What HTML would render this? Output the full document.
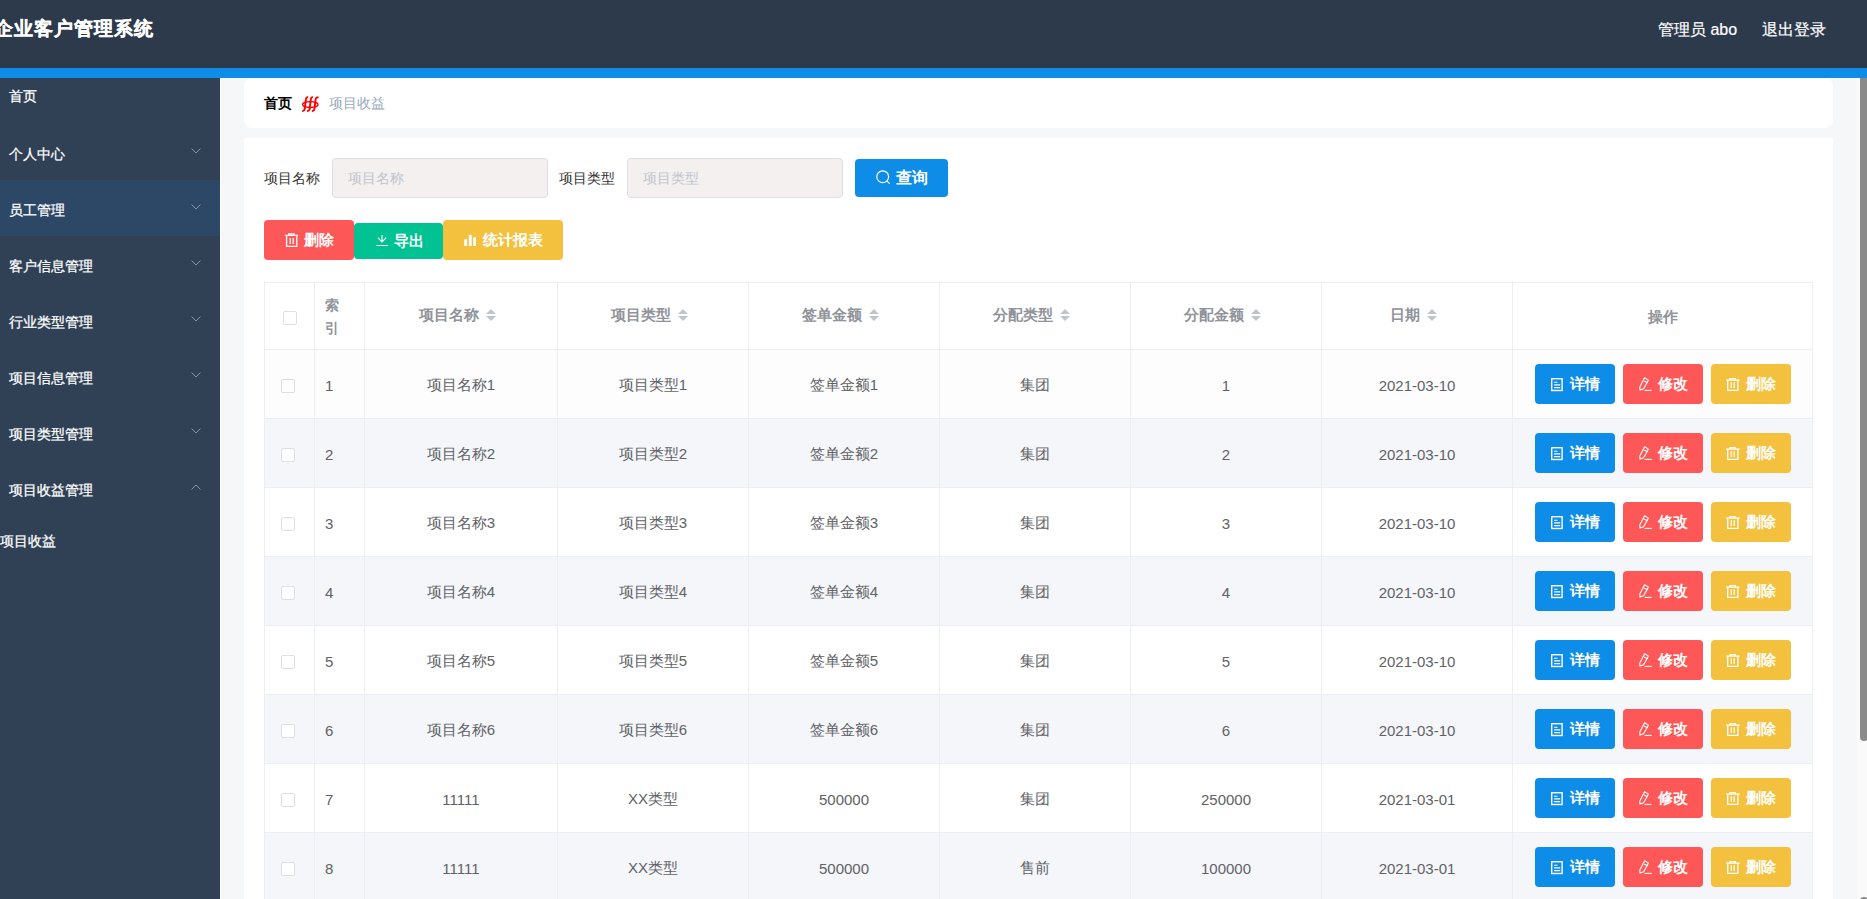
<!DOCTYPE html>
<html><head><meta charset="utf-8">
<style>
*{margin:0;padding:0;box-sizing:border-box;}
html,body{width:1867px;height:899px;overflow:hidden;background:#f5f7f9;font-family:"Liberation Sans",sans-serif;}
.abs{position:absolute;}
#hdr{left:0;top:0;width:1867px;height:68px;background:#2d3a4b;}
#title{left:-6px;top:14px;font-size:19px;letter-spacing:1px;font-weight:bold;color:#fff;line-height:29px;white-space:nowrap;-webkit-text-stroke:0.3px #fff;}
.hr{top:18px;font-size:16px;color:#fff;line-height:24px;white-space:nowrap;-webkit-text-stroke:0.2px #fff;}
#bar{left:0;top:68px;width:1867px;height:10px;background:#0e8de8;}
#side{left:0;top:78px;width:220px;height:821px;background:#304156;}
#sline{left:220px;top:78px;width:1px;height:821px;background:#fff;}
#tline{left:220px;top:78px;width:1640px;height:1px;background:#fff;}
.mi{left:9px;font-size:14px;color:#fff;line-height:20px;white-space:nowrap;-webkit-text-stroke:0.25px #fff;}
.chev{left:191px;width:10px;height:6px;margin-top:1px;}
#act{left:0;top:180px;width:220px;height:56px;background:#2d4866;}
#crumb{left:244px;top:78px;width:1589px;height:50px;background:#fff;border-radius:8px;}
#card{left:244px;top:138px;width:1589px;height:761px;background:#fff;}
.lbl{font-size:14px;color:#333;line-height:20px;white-space:nowrap;}
.inp{top:158px;width:216px;height:40px;background:#f4f0f0;border:1px solid #dcdfe6;border-radius:4px;}
.ph{font-size:14px;color:#c0c4cc;line-height:20px;position:absolute;left:15px;top:9px;white-space:nowrap;}
.btn{color:#fff;border-radius:4px;font-size:15px;font-weight:bold;white-space:nowrap;}
.btn svg{position:absolute;}
.btn span{position:absolute;line-height:20px;}
table{position:absolute;left:264px;top:282px;border-collapse:collapse;table-layout:fixed;}
td,th{border:1px solid #ebeef5;text-align:center;font-size:15px;color:#606266;font-weight:normal;padding:0;}
th{height:67px;color:#909399;font-weight:bold;font-size:15px;background:#fff;}
td{height:69px;padding-top:2px;}
tr.odd td{background:#fff;}
tr.even td{background:#f5f6fa;}
tr.first td{background:#fdfdfd;}
.cb{display:inline-block;width:14px;height:14px;border:1px solid #dcdfe6;border-radius:2px;background:#fff;}
.car{display:inline-block;vertical-align:middle;margin-left:7px;margin-right:7px;position:relative;top:-2px;}
.ops{display:flex;gap:8px;padding-left:22px;}
.ob{position:relative;width:80px;height:40px;border-radius:4px;color:#fff;font-size:15px;font-weight:bold;}
.ob .bi{position:absolute;left:16px;top:14px;}
.ob .bi2{position:absolute;left:16px;top:13px;}
.ob .bi3{position:absolute;left:15px;top:14px;}
.ob span{position:absolute;left:35px;top:10px;line-height:20px;}
#sbt{left:1857px;top:78px;width:10px;height:821px;background:#fafafa;}
#sth{left:1860px;top:78px;width:8px;height:663px;background:#8a8a8a;border-radius:0 0 4px 4px;}
#sth2{left:1860px;top:897px;width:8px;height:10px;background:#8a8a8a;border-radius:4px;}
</style></head><body>
<div id="hdr" class="abs"></div>
<div id="title" class="abs">企业客户管理系统</div>
<div class="abs hr" style="left:1658px;">管理员 abo</div>
<div class="abs hr" style="left:1762px;">退出登录</div>
<div id="bar" class="abs"></div>
<div id="side" class="abs"></div>
<div id="act" class="abs"></div>
<div id="sline" class="abs"></div>
<div id="tline" class="abs"></div>
<div class="abs mi" style="top:86px;">首页</div>
<div class="abs mi" style="top:144px;">个人中心</div>
<div class="abs mi" style="top:200px;">员工管理</div>
<div class="abs mi" style="top:256px;">客户信息管理</div>
<div class="abs mi" style="top:312px;">行业类型管理</div>
<div class="abs mi" style="top:368px;">项目信息管理</div>
<div class="abs mi" style="top:424px;">项目类型管理</div>
<div class="abs mi" style="top:480px;">项目收益管理</div>
<div class="abs mi" style="top:531px;left:0;">项目收益</div>
<svg class="abs chev" style="top:147px" viewBox="0 0 10 6"><path d="M0.5 0.5 L5 5 L9.5 0.5" fill="none" stroke="#8d97a3" stroke-width="1"/></svg>
<svg class="abs chev" style="top:203px" viewBox="0 0 10 6"><path d="M0.5 0.5 L5 5 L9.5 0.5" fill="none" stroke="#8d97a3" stroke-width="1"/></svg>
<svg class="abs chev" style="top:259px" viewBox="0 0 10 6"><path d="M0.5 0.5 L5 5 L9.5 0.5" fill="none" stroke="#8d97a3" stroke-width="1"/></svg>
<svg class="abs chev" style="top:315px" viewBox="0 0 10 6"><path d="M0.5 0.5 L5 5 L9.5 0.5" fill="none" stroke="#8d97a3" stroke-width="1"/></svg>
<svg class="abs chev" style="top:371px" viewBox="0 0 10 6"><path d="M0.5 0.5 L5 5 L9.5 0.5" fill="none" stroke="#8d97a3" stroke-width="1"/></svg>
<svg class="abs chev" style="top:427px" viewBox="0 0 10 6"><path d="M0.5 0.5 L5 5 L9.5 0.5" fill="none" stroke="#8d97a3" stroke-width="1"/></svg>
<svg class="abs chev" style="top:483px" viewBox="0 0 10 6"><path d="M0.5 5.5 L5 1 L9.5 5.5" fill="none" stroke="#8d97a3" stroke-width="1"/></svg>

<div id="crumb" class="abs"></div>
<div class="abs" style="left:264px;top:93px;font-size:14px;font-weight:bold;color:#000;line-height:20px;">首页</div>
<svg class="abs" style="left:296px;top:92px;" width="28" height="24" viewBox="0 0 28 24"><g fill="none" stroke="#f00" stroke-linecap="butt"><ellipse cx="14.3" cy="12.6" rx="7.8" ry="2.9" stroke-width="1.3"/><g stroke-width="1.9"><path d="M6.2 18.9 C7.9 19.2 8.5 18.2 8.8 16.5 L9.9 7.3 C10.2 5.6 11 5.1 12.1 5.4"/><path d="M11.1 18.9 C12.8 19.2 13.4 18.2 13.7 16.5 L14.8 7.3 C15.1 5.6 15.9 5.1 17 5.4"/><path d="M15.9 18.9 C17.6 19.2 18.2 18.2 18.5 16.5 L19.6 7.3 C19.9 5.6 20.9 5.1 22.6 5.5"/></g></g></svg>
<div class="abs" style="left:329px;top:93px;font-size:14px;color:#97a8be;line-height:20px;">项目收益</div>

<div id="card" class="abs"></div>
<div class="abs lbl" style="left:264px;top:168px;">项目名称</div>
<div class="abs inp" style="left:332px;"><span class="ph">项目名称</span></div>
<div class="abs lbl" style="left:559px;top:168px;">项目类型</div>
<div class="abs inp" style="left:627px;"><span class="ph">项目类型</span></div>
<div class="abs btn" style="left:855px;top:159px;width:93px;height:38px;background:#0e8de8;font-size:16px;">
<svg style="left:21px;top:11px" width="15" height="16" viewBox="0 0 15 16"><circle cx="6.7" cy="6.7" r="5.9" fill="none" stroke="#fff" stroke-width="1.2"/><path d="M10.9 10.9 L13.6 13.6" stroke="#fff" stroke-width="1.2"/></svg>
<span style="left:41px;top:9px;">查询</span></div>

<div class="abs btn" style="left:264px;top:220px;width:90px;height:40px;background:#fe5757;">
<svg style="left:21px;top:13px" width="14" height="14" viewBox="0 0 14 14"><g fill="none" stroke="#fff" stroke-width="1.3"><path d="M0 2.4 H13 M3.8 2.4 V0.9 H9 V2.4 M1.6 2.4 V13.3 H11.8 V2.4 M5.2 5 V11 M8.2 5 V11"/></g></svg>
<span style="left:40px;top:10px;">删除</span></div>
<div class="abs btn" style="left:354px;top:223px;width:89px;height:36px;background:#00c292;">
<svg style="left:22px;top:11px" width="13" height="13" viewBox="0 0 13 13"><g fill="none" stroke="#fff" stroke-width="1.1"><path d="M6 1 V8 M1.8 3.6 L6 7.9 L10.2 3.6 M0.5 11.5 H11.8"/></g></svg>
<span style="left:40px;top:8px;">导出</span></div>
<div class="abs btn" style="left:443px;top:220px;width:120px;height:40px;background:#f3c13e;">
<svg style="left:21px;top:14px" width="12" height="12" viewBox="0 0 12 12"><g fill="#fff"><rect x="0.2" y="5.2" width="2.9" height="6.8"/><rect x="4.8" y="0.8" width="2.9" height="11.2"/><rect x="9.2" y="3.3" width="2.9" height="8.7"/></g></svg>
<span style="left:40px;top:10px;">统计报表</span></div>

<table id="tbl">
<colgroup><col style="width:50px"><col style="width:50px"><col style="width:193px"><col style="width:191px"><col style="width:191px"><col style="width:191px"><col style="width:191px"><col style="width:191px"><col style="width:300px"></colgroup>
<tr><th><span class="cb" style="position:relative;top:3px;"></span></th><th style="text-align:left;padding-left:10px;line-height:23px;padding-top:2px;font-size:14px;">索<br>引</th>
<th><span style="position:relative;top:-1px">项目名称</span><svg class="car" width="10" height="12" viewBox="0 0 10 12"><path d="M5 0 L10 5 H0Z M0 7 H10 L5 12Z" fill="#c0c4cc"/></svg></th>
<th><span style="position:relative;top:-1px">项目类型</span><svg class="car" width="10" height="12" viewBox="0 0 10 12"><path d="M5 0 L10 5 H0Z M0 7 H10 L5 12Z" fill="#c0c4cc"/></svg></th>
<th><span style="position:relative;top:-1px">签单金额</span><svg class="car" width="10" height="12" viewBox="0 0 10 12"><path d="M5 0 L10 5 H0Z M0 7 H10 L5 12Z" fill="#c0c4cc"/></svg></th>
<th><span style="position:relative;top:-1px">分配类型</span><svg class="car" width="10" height="12" viewBox="0 0 10 12"><path d="M5 0 L10 5 H0Z M0 7 H10 L5 12Z" fill="#c0c4cc"/></svg></th>
<th><span style="position:relative;top:-1px">分配金额</span><svg class="car" width="10" height="12" viewBox="0 0 10 12"><path d="M5 0 L10 5 H0Z M0 7 H10 L5 12Z" fill="#c0c4cc"/></svg></th>
<th><span style="position:relative;top:-1px">日期</span><svg class="car" width="10" height="12" viewBox="0 0 10 12"><path d="M5 0 L10 5 H0Z M0 7 H10 L5 12Z" fill="#c0c4cc"/></svg></th>
<th style="padding-top:3px;">操作</th></tr>
<tr class="first"><td><span class="cb" style="position:relative;left:-2px;top:2px;"></span></td><td style="text-align:left;padding-left:10px;">1</td><td>项目名称1</td><td>项目类型1</td><td>签单金额1</td><td>集团</td><td>1</td><td>2021-03-10</td><td style="padding-top:0"><div class="ops"><div class="ob" style="background:#0e8de8"><svg class="bi" width="12" height="14" viewBox="0 0 12 14"><g fill="none" stroke="#fff" stroke-width="1.4"><rect x="0.7" y="0.7" width="10.4" height="11.8"/></g><g fill="none" stroke="#fff" stroke-width="1.1"><path d="M3.1 4.2 H6.5 M3.1 6.9 H9.2 M3.1 9.6 H9.2"/></g></svg><span>详情</span></div><div class="ob" style="background:#fe5757"><svg class="bi2" width="14" height="15" viewBox="0 0 14 15"><g fill="none" stroke="#fff" stroke-width="1.1" stroke-linejoin="round"><path d="M5.6 0.8 L9.5 3.1 L4.6 11.7 L1 13.1 L0.8 10.1 Z"/><path d="M5 3.9 L8.6 5.8"/><path d="M5.6 13.4 H12.7"/></g></svg><span>修改</span></div><div class="ob" style="background:#f3c13e"><svg class="bi3" width="14" height="14" viewBox="0 0 14 14"><g fill="none" stroke="#fff" stroke-width="1.3"><path d="M0.2 2.1 H13.6"/><path d="M4.1 2.1 V0.7 H9.3 V2.1"/><path d="M1.7 2.1 V12.3 H11.9 V2.1"/><path d="M5.3 4.2 V10 M8.2 4.2 V10"/></g></svg><span>删除</span></div></div></td></tr>
<tr class="even"><td><span class="cb" style="position:relative;left:-2px;top:2px;"></span></td><td style="text-align:left;padding-left:10px;">2</td><td>项目名称2</td><td>项目类型2</td><td>签单金额2</td><td>集团</td><td>2</td><td>2021-03-10</td><td style="padding-top:0"><div class="ops"><div class="ob" style="background:#0e8de8"><svg class="bi" width="12" height="14" viewBox="0 0 12 14"><g fill="none" stroke="#fff" stroke-width="1.4"><rect x="0.7" y="0.7" width="10.4" height="11.8"/></g><g fill="none" stroke="#fff" stroke-width="1.1"><path d="M3.1 4.2 H6.5 M3.1 6.9 H9.2 M3.1 9.6 H9.2"/></g></svg><span>详情</span></div><div class="ob" style="background:#fe5757"><svg class="bi2" width="14" height="15" viewBox="0 0 14 15"><g fill="none" stroke="#fff" stroke-width="1.1" stroke-linejoin="round"><path d="M5.6 0.8 L9.5 3.1 L4.6 11.7 L1 13.1 L0.8 10.1 Z"/><path d="M5 3.9 L8.6 5.8"/><path d="M5.6 13.4 H12.7"/></g></svg><span>修改</span></div><div class="ob" style="background:#f3c13e"><svg class="bi3" width="14" height="14" viewBox="0 0 14 14"><g fill="none" stroke="#fff" stroke-width="1.3"><path d="M0.2 2.1 H13.6"/><path d="M4.1 2.1 V0.7 H9.3 V2.1"/><path d="M1.7 2.1 V12.3 H11.9 V2.1"/><path d="M5.3 4.2 V10 M8.2 4.2 V10"/></g></svg><span>删除</span></div></div></td></tr>
<tr class="odd"><td><span class="cb" style="position:relative;left:-2px;top:2px;"></span></td><td style="text-align:left;padding-left:10px;">3</td><td>项目名称3</td><td>项目类型3</td><td>签单金额3</td><td>集团</td><td>3</td><td>2021-03-10</td><td style="padding-top:0"><div class="ops"><div class="ob" style="background:#0e8de8"><svg class="bi" width="12" height="14" viewBox="0 0 12 14"><g fill="none" stroke="#fff" stroke-width="1.4"><rect x="0.7" y="0.7" width="10.4" height="11.8"/></g><g fill="none" stroke="#fff" stroke-width="1.1"><path d="M3.1 4.2 H6.5 M3.1 6.9 H9.2 M3.1 9.6 H9.2"/></g></svg><span>详情</span></div><div class="ob" style="background:#fe5757"><svg class="bi2" width="14" height="15" viewBox="0 0 14 15"><g fill="none" stroke="#fff" stroke-width="1.1" stroke-linejoin="round"><path d="M5.6 0.8 L9.5 3.1 L4.6 11.7 L1 13.1 L0.8 10.1 Z"/><path d="M5 3.9 L8.6 5.8"/><path d="M5.6 13.4 H12.7"/></g></svg><span>修改</span></div><div class="ob" style="background:#f3c13e"><svg class="bi3" width="14" height="14" viewBox="0 0 14 14"><g fill="none" stroke="#fff" stroke-width="1.3"><path d="M0.2 2.1 H13.6"/><path d="M4.1 2.1 V0.7 H9.3 V2.1"/><path d="M1.7 2.1 V12.3 H11.9 V2.1"/><path d="M5.3 4.2 V10 M8.2 4.2 V10"/></g></svg><span>删除</span></div></div></td></tr>
<tr class="even"><td><span class="cb" style="position:relative;left:-2px;top:2px;"></span></td><td style="text-align:left;padding-left:10px;">4</td><td>项目名称4</td><td>项目类型4</td><td>签单金额4</td><td>集团</td><td>4</td><td>2021-03-10</td><td style="padding-top:0"><div class="ops"><div class="ob" style="background:#0e8de8"><svg class="bi" width="12" height="14" viewBox="0 0 12 14"><g fill="none" stroke="#fff" stroke-width="1.4"><rect x="0.7" y="0.7" width="10.4" height="11.8"/></g><g fill="none" stroke="#fff" stroke-width="1.1"><path d="M3.1 4.2 H6.5 M3.1 6.9 H9.2 M3.1 9.6 H9.2"/></g></svg><span>详情</span></div><div class="ob" style="background:#fe5757"><svg class="bi2" width="14" height="15" viewBox="0 0 14 15"><g fill="none" stroke="#fff" stroke-width="1.1" stroke-linejoin="round"><path d="M5.6 0.8 L9.5 3.1 L4.6 11.7 L1 13.1 L0.8 10.1 Z"/><path d="M5 3.9 L8.6 5.8"/><path d="M5.6 13.4 H12.7"/></g></svg><span>修改</span></div><div class="ob" style="background:#f3c13e"><svg class="bi3" width="14" height="14" viewBox="0 0 14 14"><g fill="none" stroke="#fff" stroke-width="1.3"><path d="M0.2 2.1 H13.6"/><path d="M4.1 2.1 V0.7 H9.3 V2.1"/><path d="M1.7 2.1 V12.3 H11.9 V2.1"/><path d="M5.3 4.2 V10 M8.2 4.2 V10"/></g></svg><span>删除</span></div></div></td></tr>
<tr class="odd"><td><span class="cb" style="position:relative;left:-2px;top:2px;"></span></td><td style="text-align:left;padding-left:10px;">5</td><td>项目名称5</td><td>项目类型5</td><td>签单金额5</td><td>集团</td><td>5</td><td>2021-03-10</td><td style="padding-top:0"><div class="ops"><div class="ob" style="background:#0e8de8"><svg class="bi" width="12" height="14" viewBox="0 0 12 14"><g fill="none" stroke="#fff" stroke-width="1.4"><rect x="0.7" y="0.7" width="10.4" height="11.8"/></g><g fill="none" stroke="#fff" stroke-width="1.1"><path d="M3.1 4.2 H6.5 M3.1 6.9 H9.2 M3.1 9.6 H9.2"/></g></svg><span>详情</span></div><div class="ob" style="background:#fe5757"><svg class="bi2" width="14" height="15" viewBox="0 0 14 15"><g fill="none" stroke="#fff" stroke-width="1.1" stroke-linejoin="round"><path d="M5.6 0.8 L9.5 3.1 L4.6 11.7 L1 13.1 L0.8 10.1 Z"/><path d="M5 3.9 L8.6 5.8"/><path d="M5.6 13.4 H12.7"/></g></svg><span>修改</span></div><div class="ob" style="background:#f3c13e"><svg class="bi3" width="14" height="14" viewBox="0 0 14 14"><g fill="none" stroke="#fff" stroke-width="1.3"><path d="M0.2 2.1 H13.6"/><path d="M4.1 2.1 V0.7 H9.3 V2.1"/><path d="M1.7 2.1 V12.3 H11.9 V2.1"/><path d="M5.3 4.2 V10 M8.2 4.2 V10"/></g></svg><span>删除</span></div></div></td></tr>
<tr class="even"><td><span class="cb" style="position:relative;left:-2px;top:2px;"></span></td><td style="text-align:left;padding-left:10px;">6</td><td>项目名称6</td><td>项目类型6</td><td>签单金额6</td><td>集团</td><td>6</td><td>2021-03-10</td><td style="padding-top:0"><div class="ops"><div class="ob" style="background:#0e8de8"><svg class="bi" width="12" height="14" viewBox="0 0 12 14"><g fill="none" stroke="#fff" stroke-width="1.4"><rect x="0.7" y="0.7" width="10.4" height="11.8"/></g><g fill="none" stroke="#fff" stroke-width="1.1"><path d="M3.1 4.2 H6.5 M3.1 6.9 H9.2 M3.1 9.6 H9.2"/></g></svg><span>详情</span></div><div class="ob" style="background:#fe5757"><svg class="bi2" width="14" height="15" viewBox="0 0 14 15"><g fill="none" stroke="#fff" stroke-width="1.1" stroke-linejoin="round"><path d="M5.6 0.8 L9.5 3.1 L4.6 11.7 L1 13.1 L0.8 10.1 Z"/><path d="M5 3.9 L8.6 5.8"/><path d="M5.6 13.4 H12.7"/></g></svg><span>修改</span></div><div class="ob" style="background:#f3c13e"><svg class="bi3" width="14" height="14" viewBox="0 0 14 14"><g fill="none" stroke="#fff" stroke-width="1.3"><path d="M0.2 2.1 H13.6"/><path d="M4.1 2.1 V0.7 H9.3 V2.1"/><path d="M1.7 2.1 V12.3 H11.9 V2.1"/><path d="M5.3 4.2 V10 M8.2 4.2 V10"/></g></svg><span>删除</span></div></div></td></tr>
<tr class="odd"><td><span class="cb" style="position:relative;left:-2px;top:2px;"></span></td><td style="text-align:left;padding-left:10px;">7</td><td>11111</td><td>XX类型</td><td>500000</td><td>集团</td><td>250000</td><td>2021-03-01</td><td style="padding-top:0"><div class="ops"><div class="ob" style="background:#0e8de8"><svg class="bi" width="12" height="14" viewBox="0 0 12 14"><g fill="none" stroke="#fff" stroke-width="1.4"><rect x="0.7" y="0.7" width="10.4" height="11.8"/></g><g fill="none" stroke="#fff" stroke-width="1.1"><path d="M3.1 4.2 H6.5 M3.1 6.9 H9.2 M3.1 9.6 H9.2"/></g></svg><span>详情</span></div><div class="ob" style="background:#fe5757"><svg class="bi2" width="14" height="15" viewBox="0 0 14 15"><g fill="none" stroke="#fff" stroke-width="1.1" stroke-linejoin="round"><path d="M5.6 0.8 L9.5 3.1 L4.6 11.7 L1 13.1 L0.8 10.1 Z"/><path d="M5 3.9 L8.6 5.8"/><path d="M5.6 13.4 H12.7"/></g></svg><span>修改</span></div><div class="ob" style="background:#f3c13e"><svg class="bi3" width="14" height="14" viewBox="0 0 14 14"><g fill="none" stroke="#fff" stroke-width="1.3"><path d="M0.2 2.1 H13.6"/><path d="M4.1 2.1 V0.7 H9.3 V2.1"/><path d="M1.7 2.1 V12.3 H11.9 V2.1"/><path d="M5.3 4.2 V10 M8.2 4.2 V10"/></g></svg><span>删除</span></div></div></td></tr>
<tr class="even"><td><span class="cb" style="position:relative;left:-2px;top:2px;"></span></td><td style="text-align:left;padding-left:10px;">8</td><td>11111</td><td>XX类型</td><td>500000</td><td>售前</td><td>100000</td><td>2021-03-01</td><td style="padding-top:0"><div class="ops"><div class="ob" style="background:#0e8de8"><svg class="bi" width="12" height="14" viewBox="0 0 12 14"><g fill="none" stroke="#fff" stroke-width="1.4"><rect x="0.7" y="0.7" width="10.4" height="11.8"/></g><g fill="none" stroke="#fff" stroke-width="1.1"><path d="M3.1 4.2 H6.5 M3.1 6.9 H9.2 M3.1 9.6 H9.2"/></g></svg><span>详情</span></div><div class="ob" style="background:#fe5757"><svg class="bi2" width="14" height="15" viewBox="0 0 14 15"><g fill="none" stroke="#fff" stroke-width="1.1" stroke-linejoin="round"><path d="M5.6 0.8 L9.5 3.1 L4.6 11.7 L1 13.1 L0.8 10.1 Z"/><path d="M5 3.9 L8.6 5.8"/><path d="M5.6 13.4 H12.7"/></g></svg><span>修改</span></div><div class="ob" style="background:#f3c13e"><svg class="bi3" width="14" height="14" viewBox="0 0 14 14"><g fill="none" stroke="#fff" stroke-width="1.3"><path d="M0.2 2.1 H13.6"/><path d="M4.1 2.1 V0.7 H9.3 V2.1"/><path d="M1.7 2.1 V12.3 H11.9 V2.1"/><path d="M5.3 4.2 V10 M8.2 4.2 V10"/></g></svg><span>删除</span></div></div></td></tr>
</table>

<div id="sbt" class="abs"></div>
<div id="sth" class="abs"></div><div id="sth2" class="abs"></div>
</body></html>
